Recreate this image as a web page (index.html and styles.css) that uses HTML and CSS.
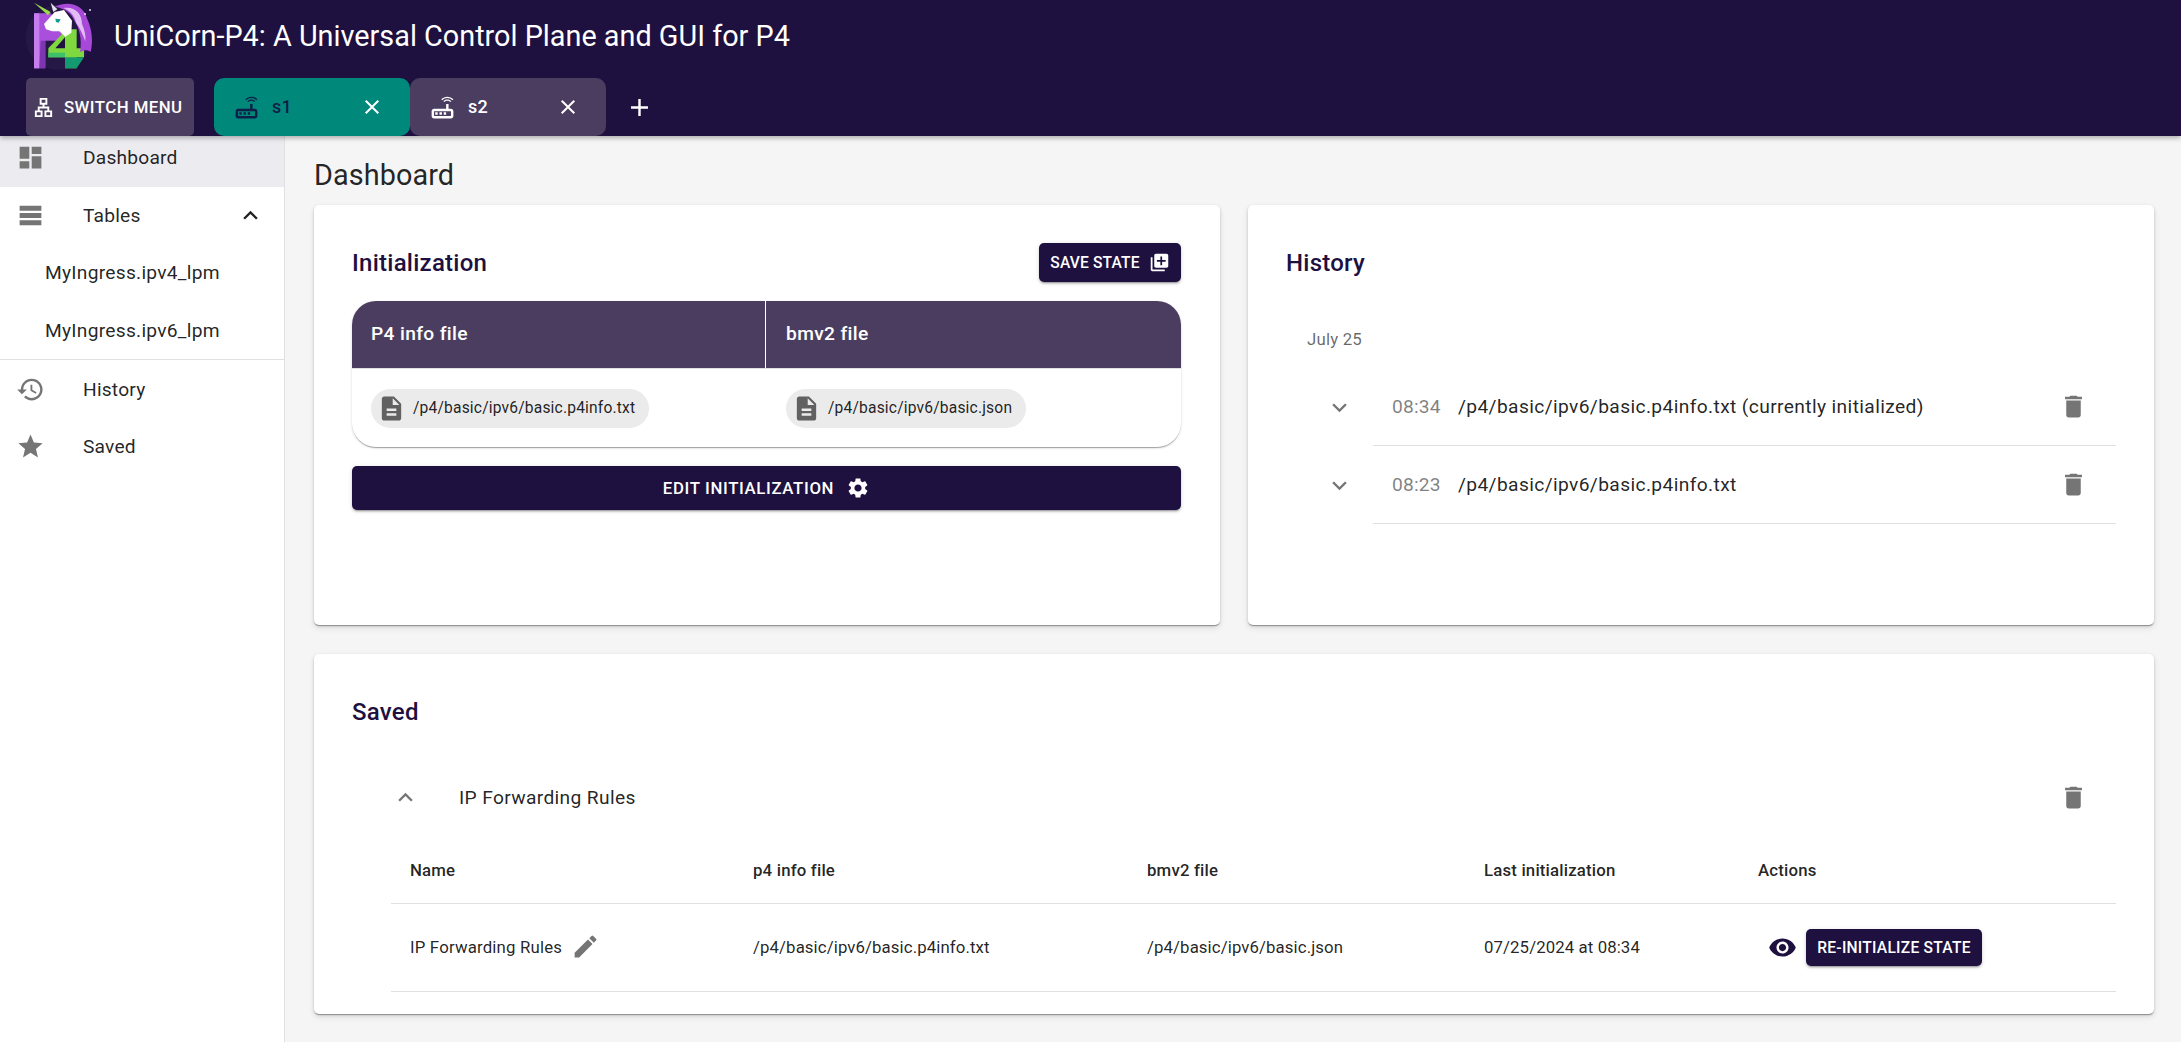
FILE: index.html
```html
<!DOCTYPE html>
<html lang="en">
<head>
<meta charset="utf-8">
<title>UniCorn-P4</title>
<link rel="stylesheet" href="styles.css">
</head>
<body>
<svg class="sprite" xmlns="http://www.w3.org/2000/svg">
  <symbol id="i-dashboard" viewBox="0 0 24 24"><path d="M3 13h8V3H3v10zm0 8h8v-6H3v6zm10 0h8V11h-8v10zm0-18v6h8V3h-8z"/></symbol>
  <symbol id="i-rows" viewBox="0 0 24 24"><path d="M21 8H3V4h18v4zm0 2H3v4h18v-4zm0 6H3v4h18v-4z"/></symbol>
  <symbol id="i-less" viewBox="0 0 24 24"><path d="M12 8l-6 6 1.41 1.41L12 10.83l4.59 4.58L18 14z"/></symbol>
  <symbol id="i-more" viewBox="0 0 24 24"><path d="M16.59 8.59 12 13.17 7.41 8.59 6 10l6 6 6-6z"/></symbol>
  <symbol id="i-history" viewBox="0 0 24 24"><path d="M13 3c-4.97 0-9 4.03-9 9H1l3.89 3.89.07.14L9 12H6c0-3.87 3.13-7 7-7s7 3.13 7 7-3.13 7-7 7c-1.93 0-3.68-.79-4.94-2.06l-1.42 1.42C8.27 19.99 10.51 21 13 21c4.97 0 9-4.03 9-9s-4.03-9-9-9zm-1 5v5l4.28 2.54.72-1.21-3.5-2.08V8H12z"/></symbol>
  <symbol id="i-star" viewBox="0 0 24 24"><path d="M12 17.27 18.18 21l-1.64-7.03L22 9.24l-7.19-.61L12 2 9.19 8.63 2 9.24l5.46 4.73L5.82 21z"/></symbol>
  <symbol id="i-close" viewBox="0 0 24 24"><path d="M19 6.41 17.59 5 12 10.59 6.41 5 5 6.41 10.59 12 5 17.59 6.41 19 12 13.41 17.59 19 19 17.59 13.41 12z"/></symbol>
  <symbol id="i-add" viewBox="0 0 24 24"><path d="M19 13h-6v6h-2v-6H5v-2h6V5h2v6h6v2z"/></symbol>
  <symbol id="i-router" viewBox="0 0 24 24"><path d="M16 4.200c1.500 0 3 .6 4.200 1.700l.8-.8C19.600 3.700 17.800 3 16 3s-3.600.7-5 2.100l.8.8C13 4.800 14.500 4.200 16 4.200zm-3.300 2.500.8.8c.7-.7 1.600-1 2.500-1s1.800.3 2.500 1l.8-.8c-.9-.9-2.100-1.400-3.300-1.400s-2.400.5-3.300 1.400zM19 13h-2V9h-2v4H5c-1.100 0-2 .9-2 2v4c0 1.100.9 2 2 2h14c1.100 0 2-.9 2-2v-4c0-1.100-.9-2-2-2zm0 6H5v-4h14v4zM6 16h2v2H6zm3.500 0h2v2h-2zm3.500 0h2v2h-2z"/></symbol>
  <symbol id="i-lan" viewBox="0 0 24 24"><path d="M13 22h8v-7h-3v-4h-5V9h3V2H8v7h3v2H6v4H3v7h8v-7H8v-2h8v2h-3v7zM10 7V4h4v3h-4zM9 17v3H5v-3h4zm10 0v3h-4v-3h4z"/></symbol>
  <symbol id="i-library" viewBox="0 0 24 24"><path d="M4 6H2v14c0 1.100.9 2 2 2h14v-2H4V6zm16-4H8c-1.100 0-2 .9-2 2v12c0 1.100.9 2 2 2h12c1.100 0 2-.9 2-2V4c0-1.100-.9-2-2-2zm-1 9h-4v4h-2v-4H9V9h4V5h2v4h4v2z"/></symbol>
  <symbol id="i-settings" viewBox="0 0 24 24"><path d="M19.140 12.940c.04-.3.06-.61.06-.94 0-.32-.02-.64-.07-.94l2.030-1.580c.18-.14.23-.41.12-.61l-1.920-3.320c-.12-.22-.37-.29-.59-.22l-2.390.96c-.5-.38-1.030-.7-1.620-.94l-.36-2.540c-.04-.24-.24-.41-.48-.41h-3.840c-.24 0-.43.17-.47.41l-.36 2.540c-.59.24-1.130.57-1.620.94l-2.390-.96c-.22-.08-.47 0-.59.22L2.740 8.870c-.12.21-.08.47.12.61l2.030 1.580c-.05.3-.09.63-.09.94s.02.64.07.94l-2.030 1.580c-.18.14-.23.41-.12.61l1.920 3.320c.12.22.37.29.59.22l2.390-.96c.5.38 1.030.7 1.620.94l.36 2.540c.05.24.24.41.48.41h3.840c.24 0 .44-.17.47-.41l.36-2.540c.59-.24 1.130-.56 1.620-.94l2.390.96c.22.08.47 0 .59-.22l1.920-3.320c.12-.22.07-.47-.12-.61l-2.010-1.580zM12 15.600c-1.980 0-3.600-1.620-3.600-3.600s1.620-3.600 3.600-3.600 3.600 1.620 3.600 3.600-1.620 3.600-3.600 3.600z"/></symbol>
  <symbol id="i-file" viewBox="0 0 24 24"><path d="M14 2H6c-1.100 0-1.990.9-1.990 2L4 20c0 1.100.89 2 1.990 2H18c1.100 0 2-.9 2-2V8l-6-6zm2 16H8v-2h8v2zm0-4H8v-2h8v2zm-3-5V3.500L18.500 9H13z"/></symbol>
  <symbol id="i-delete" viewBox="0 0 24 24"><path d="M6 19c0 1.100.9 2 2 2h8c1.100 0 2-.9 2-2V7H6v12zM19 4h-3.500l-1-1h-5l-1 1H5v2h14V4z"/></symbol>
  <symbol id="i-edit" viewBox="0 0 24 24"><path d="M3 17.250V21h3.750L17.810 9.940l-3.750-3.750L3 17.250zM20.710 7.040c.39-.39.39-1.020 0-1.410l-2.340-2.340a.996.996 0 0 0-1.410 0l-1.830 1.830 3.750 3.750 1.830-1.830z"/></symbol>
  <symbol id="i-eye" viewBox="0 0 24 24"><path d="M12 4.500C7 4.500 2.730 7.610 1 12c1.730 4.390 6 7.500 11 7.500s9.270-3.110 11-7.500c-1.730-4.390-6-7.500-11-7.500zM12 17c-2.760 0-5-2.240-5-5s2.240-5 5-5 5 2.240 5 5-2.240 5-5 5zm0-8c-1.660 0-3 1.340-3 3s1.340 3 3 3 3-1.340 3-3-1.340-3-3-3z"/></symbol>
</svg>

<header class="topbar">
  <div class="brand">
    <svg class="logo" viewBox="0 0 270 225" aria-hidden="true">
      <circle cx="115" cy="112" r="98" fill="#251746"/>
      <polygon points="42,40 92,40 120,70 138,100 118,122 76,122 76,205 42,205" fill="#a94fdc"/>
      <polygon points="42,40 58,40 58,205 42,205" fill="#c77cf0"/>
      <polygon points="58,205 76,205 76,122 62,122" fill="#7d35b0"/>
      <polygon points="140,88 170,88 170,145 192,145 192,172 170,172 170,205 135,205 135,172 85,172 85,145" fill="#7fd83f"/>
      <polygon points="135,112 135,145 106,145" fill="#1e103f"/>
      <polygon points="85,158 135,158 135,172 85,172" fill="#3cc06a"/>
      <polygon points="135,172 192,172 170,205 135,205" fill="#149a70"/>
      <polygon points="42,8 92,36 84,46" fill="#9bd94a"/>
      <polygon points="92,8 112,28 100,36" fill="#e4e4e4"/>
      <path d="M104 20C146 0 192 14 202 58c14 30 18 68 10 98-10-8-20-6-32 0 6-34 0-70-18-96-8-20-26-34-58-40z" fill="#a748d8"/>
      <path d="M130 24C164 18 186 40 186 72c8 18 12 36 10 52-8-22-18-42-28-56-4-20-18-36-38-44z" fill="#e2bdf5"/>
      <path d="M72 72 104 36 132 30 156 62 154 98 136 110 118 94 96 94 78 88z" fill="#fff"/>
      <path d="M106 56 122 58 116 68 108 66z" fill="#149a94"/>
      <circle cx="195" cy="42" r="3" fill="#e9dcf7"/>
      <circle cx="210" cy="30" r="3" fill="#e9dcf7"/>
    </svg>
    <h1 class="app-title">UniCorn-P4: A Universal Control Plane and GUI for P4</h1>
  </div>
  <nav class="tabbar">
    <button class="menu-btn"><svg class="ic-lan"><use href="#i-lan"/></svg>SWITCH MENU</button>
    <div class="tabs">
      <div class="tab tab-active"><svg class="ic-router"><use href="#i-router"/></svg><span class="tab-label">s1</span><svg class="ic-close"><use href="#i-close"/></svg></div>
      <div class="tab"><svg class="ic-router"><use href="#i-router"/></svg><span class="tab-label">s2</span><svg class="ic-close"><use href="#i-close"/></svg></div>
      <svg class="ic-add"><use href="#i-add"/></svg>
    </div>
  </nav>
</header>

<div class="shell">
  <aside class="sidebar">
    <ul class="nav">
      <li class="nav-item selected"><svg class="ic"><use href="#i-dashboard"/></svg><span class="nav-text">Dashboard</span></li>
      <li class="nav-item"><svg class="ic"><use href="#i-rows"/></svg><span class="nav-text">Tables</span><svg class="ic ic-expand"><use href="#i-less"/></svg></li>
      <li class="nav-item sub">MyIngress.ipv4_lpm</li>
      <li class="nav-item sub">MyIngress.ipv6_lpm</li>
      <li class="nav-divider"></li>
      <li class="nav-item"><svg class="ic"><use href="#i-history"/></svg><span class="nav-text">History</span></li>
      <li class="nav-item"><svg class="ic"><use href="#i-star"/></svg><span class="nav-text">Saved</span></li>
    </ul>
  </aside>

  <main class="main">
    <h2 class="page-title">Dashboard</h2>
    <div class="cards">
      <section class="card card-init">
        <div class="card-head">
          <h3 class="card-title">Initialization</h3>
          <button class="btn btn-small">SAVE STATE<svg class="ic-btn"><use href="#i-library"/></svg></button>
        </div>
        <div class="init-table">
          <div class="init-th init-th-first">P4 info file</div>
          <div class="init-th init-col2">bmv2 file</div>
          <div class="init-td"><span class="chip"><svg class="ic-chip"><use href="#i-file"/></svg>/p4/basic/ipv6/basic.p4info.txt</span></div>
          <div class="init-td init-col2"><span class="chip"><svg class="ic-chip"><use href="#i-file"/></svg>/p4/basic/ipv6/basic.json</span></div>
        </div>
        <button class="btn btn-wide">EDIT INITIALIZATION<svg class="ic-btn"><use href="#i-settings"/></svg></button>
      </section>

      <section class="card">
        <div class="card-head">
          <h3 class="card-title">History</h3>
        </div>
        <div class="date-label">July 25</div>
        <div class="hist-row">
          <svg class="ic ic-chev"><use href="#i-more"/></svg>
          <div class="hist-body"><span class="hist-time">08:34</span><span class="hist-path">/p4/basic/ipv6/basic.p4info.txt (currently initialized)</span><svg class="ic ic-trash"><use href="#i-delete"/></svg></div>
        </div>
        <div class="hist-row">
          <svg class="ic ic-chev"><use href="#i-more"/></svg>
          <div class="hist-body"><span class="hist-time">08:23</span><span class="hist-path">/p4/basic/ipv6/basic.p4info.txt</span><svg class="ic ic-trash"><use href="#i-delete"/></svg></div>
        </div>
      </section>

      <section class="card card-full">
        <div class="card-head">
          <h3 class="card-title">Saved</h3>
        </div>
        <div class="saved">
          <div class="saved-group">
            <svg class="ic ic-chev-up"><use href="#i-less"/></svg>
            <span class="saved-name">IP Forwarding Rules</span>
            <svg class="ic ic-trash"><use href="#i-delete"/></svg>
          </div>
          <div class="saved-row saved-head">
            <div>Name</div><div>p4 info file</div><div>bmv2 file</div><div>Last initialization</div><div>Actions</div>
          </div>
          <div class="saved-row saved-data">
            <div class="name-cell">IP Forwarding Rules<svg class="ic ic-edit"><use href="#i-edit"/></svg></div>
            <div>/p4/basic/ipv6/basic.p4info.txt</div>
            <div>/p4/basic/ipv6/basic.json</div>
            <div>07/25/2024 at 08:34</div>
            <div class="actions-cell"><svg class="ic ic-eye"><use href="#i-eye"/></svg><button class="btn btn-reinit">RE-INITIALIZE STATE</button></div>
          </div>
        </div>
      </section>
    </div>
  </main>
</div>
</body>
</html>
```

FILE: styles.css
```css
* { box-sizing: border-box; }
html, body { height: 100%; }
body {
  margin: 0;
  display: flex;
  flex-direction: column;
  overflow: hidden;
  background: #f5f5f5;
  color: rgba(0, 0, 0, 0.87);
  font-family: Roboto, "Liberation Sans", sans-serif;
  font-size: 19.2px;
  letter-spacing: 0.2px;
}
.sprite { display: none; }
svg { fill: currentColor; flex: none; display: block; }
h1, h2, h3 { margin: 0; font-weight: 400; }
ul { margin: 0; padding: 0; list-style: none; }
button { font-family: inherit; border: 0; cursor: pointer; }

.topbar {
  position: relative;
  z-index: 2;
  flex: none;
  height: 136px;
  background: #1e103f;
  color: #fff;
  box-shadow: 0 2px 5px rgba(0, 0, 0, 0.3);
}
.brand { display: flex; align-items: center; height: 78px; padding-left: 20px; }
.logo { width: 90px; height: 75px; align-self: flex-start; }
.app-title { margin-left: 4px; margin-bottom: 5px; font-size: 28.8px; line-height: 1.2; letter-spacing: 0.01px; }
.tabbar { display: flex; height: 58px; padding-left: 26px; }
.menu-btn {
  display: flex;
  align-items: center;
  gap: 9px;
  width: 168px;
  padding: 0 0 0 6px;
  background: #4b3d60;
  color: #fff;
  border-radius: 5px;
  font-size: 16.8px;
  font-weight: 500;
  letter-spacing: 0.45px;
}
.ic-lan { width: 23px; height: 23px; }
.tabs { display: flex; align-items: stretch; margin-left: 20px; }
.tab {
  display: flex;
  align-items: center;
  width: 196px;
  padding: 0 26px 0 18px;
  background: #4b3d60;
  color: #fff;
  border-radius: 10px;
  font-size: 18px;
  font-weight: 500;
}
.tab-active { background: #00897b; color: #0f1f47; }
.tab-active .ic-close { color: #fff; }
.ic-router { width: 29px; height: 29px; }
.tab-label { flex: 1; margin-left: 11px; margin-top: -2px; }
.ic-close { width: 24px; height: 24px; }
.ic-add { width: 29px; height: 29px; margin: 15px 0 0 19px; color: #fff; }

.shell { flex: 1; display: flex; min-height: 0; }
.sidebar { flex: none; width: 285px; background: #fff; border-right: 1px solid #e0e0e0; }
.nav { margin-top: -7px; }
.nav-item { display: flex; align-items: center; height: 57.6px; padding-left: 16px; }
.nav-item.selected { background: #ecebf0; }
.nav-text { flex: 1; margin-left: 38px; }
.ic { width: 29px; height: 29px; color: #757575; }
.ic-expand { margin-right: 19px; color: #212121; }
.sub { padding-left: 45px; letter-spacing: 0.26px; }
.nav-divider { height: 1px; background: #e0e0e0; }

.main { flex: 1; min-width: 0; padding: 0 27px 0 29px; }
.page-title { height: 69px; padding-top: 20px; font-size: 28.8px; line-height: 38px; letter-spacing: 0.1px; }
.cards { display: grid; grid-template-columns: 906px 906px; grid-template-rows: 420px 360px; gap: 29px 28px; }
.card {
  padding: 38px;
  background: #fff;
  border-radius: 5px;
  box-shadow: 0 2px 1px -1px rgba(0, 0, 0, 0.2), 0 1px 1px rgba(0, 0, 0, 0.14), 0 1px 3px rgba(0, 0, 0, 0.12), 0 3px 6px rgba(0, 0, 0, 0.1);
}
.card-init { padding-right: 39px; }
.card-full { grid-column: 1 / 3; }
.card-head { display: flex; align-items: center; justify-content: space-between; height: 39px; }
.card-title { color: #1e103f; font-size: 24px; font-weight: 500; letter-spacing: 0.25px; }

.btn {
  display: flex;
  align-items: center;
  justify-content: center;
  background: #1e103f;
  color: #fff;
  border-radius: 5px;
  font-weight: 500;
  box-shadow: 0 3px 1px -2px rgba(0, 0, 0, 0.2), 0 2px 2px rgba(0, 0, 0, 0.14), 0 1px 5px rgba(0, 0, 0, 0.12);
}
.btn-small { gap: 9px; width: 142px; height: 39px; padding: 0; font-size: 15.6px; letter-spacing: 0.15px; }
.ic-btn { width: 21px; height: 21px; }
.btn-wide { gap: 12px; width: 100%; height: 44px; margin-top: 19px; font-size: 16.8px; letter-spacing: 0.65px; }
.btn-wide .ic-btn { width: 24px; height: 24px; }

.init-table {
  display: grid;
  grid-template-columns: 414px 415px;
  grid-template-rows: 67px 79px;
  margin-top: 19px;
  border-radius: 24px;
  overflow: hidden;
  background: #fff;
  box-shadow: 0 2px 1px -1px rgba(0, 0, 0, 0.2), 0 1px 1px rgba(0, 0, 0, 0.14), 0 1px 3px rgba(0, 0, 0, 0.12);
}
.init-th { display: flex; align-items: center; padding: 0 0 2px 19px; background: #4b3d60; color: #fff; font-size: 19.2px; font-weight: 500; letter-spacing: 0.35px; }
.init-th-first { border-right: 1px solid #fff; }
.init-td { display: flex; align-items: center; padding-left: 19px; border-top: 1px solid #e0e0e0; }
.init-th.init-col2, .init-td.init-col2 { padding-left: 20px; }
.chip {
  display: inline-flex;
  align-items: center;
  height: 39px;
  padding: 0 14px 0 6px;
  background: #ebebeb;
  border-radius: 20px;
  font-size: 15.6px;
  letter-spacing: 0.17px;
}
.ic-chip { width: 29px; height: 29px; margin-right: 7px; color: #616161; }

.date-label { margin-top: 45px; margin-left: 21px; font-size: 16.8px; line-height: 24px; color: rgba(0, 0, 0, 0.6); }
.date-label + .hist-row { margin-top: 17px; }
.hist-row { display: flex; align-items: center; }
.ic-chev { margin: 0 19px 0 39px; }
.hist-body { flex: 1; display: flex; align-items: center; height: 78px; padding-left: 19px; border-bottom: 1px solid #e0e0e0; }
.hist-time { width: 66px; color: rgba(0, 0, 0, 0.5); }
.hist-path { flex: 1; letter-spacing: 0.38px; }
.ic-trash { margin-right: 28px; }

.saved { margin: 27px 0 0 39px; }
.saved-group { display: flex; align-items: center; height: 78px; }
.saved-name { flex: 1; margin-left: 39px; letter-spacing: 0.35px; }
.saved-row { display: grid; grid-template-columns: 343px 394px 337px 274px 377px; align-items: center; border-bottom: 1px solid #e0e0e0; font-size: 16.8px; letter-spacing: 0.1px; }
.saved-row > div { padding-left: 19px; }
.saved-head { height: 68px; font-weight: 500; letter-spacing: 0.18px; }
.saved-data { height: 88px; padding-bottom: 2px; }
.name-cell { display: flex; align-items: center; letter-spacing: 0.18px; }
.ic-edit { margin: 0 0 0 9px; }
.actions-cell { display: flex; align-items: center; margin-top: 2px; }
.ic-eye { margin-left: 10px; color: #1e103f; }
.btn-reinit { width: 176px; height: 37px; margin-left: 9px; padding: 0; font-size: 15.6px; letter-spacing: 0.25px; }
```
